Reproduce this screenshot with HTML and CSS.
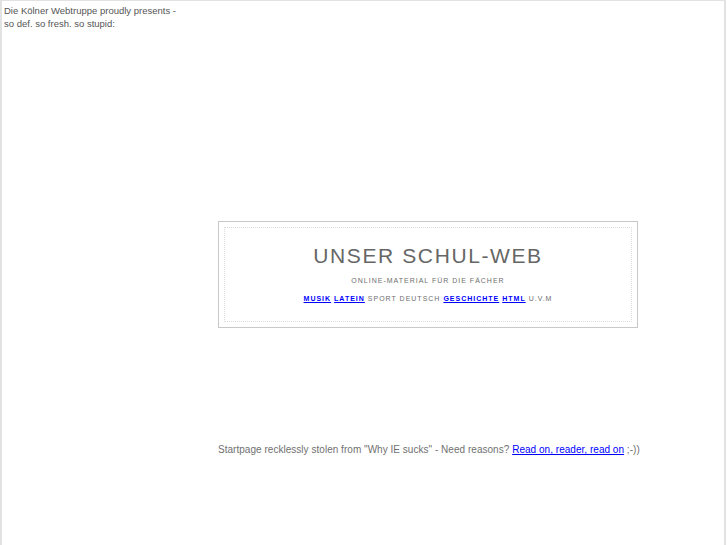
FILE: index.html
```html
<!DOCTYPE html>
<html>
<head>
<meta charset="utf-8">
<title>Unser Schul-Web</title>
<link rel="stylesheet" href="styles.css">
</head>
<body>
<div class="frame">
  <p class="intro">Die Kölner Webtruppe proudly presents -<br>so def. so fresh. so stupid:</p>
  <div class="panel">
    <div class="panel-inner">
      <h1 class="title">UNSER SCHUL-WEB</h1>
      <p class="subtitle">ONLINE-MATERIAL FÜR DIE FÄCHER</p>
      <p class="subjects"><a href="#">MUSIK</a> <a href="#">LATEIN</a> SPORT DEUTSCH <a href="#">GESCHICHTE</a> <a href="#">HTML</a> U.V.M</p>
    </div>
  </div>
  <p class="credit">Startpage recklessly stolen from "Why IE sucks" - Need reasons? <a href="#">Read on, reader, read on</a> ;-))</p>
</div>
</body>
</html>
```

FILE: styles.css
```css
html, body {
  margin: 0;
  padding: 0;
  background: #fff;
}

body {
  font-family: "Liberation Sans", Arial, sans-serif;
  color: #666;
}

.frame {
  border-top: 1px solid #e2e2e2;
  border-left: 2px solid #e2e2e2;
  border-right: 2px solid #e2e2e2;
  margin-right: 1px;
  min-height: 600px;
  box-sizing: border-box;
}

.intro {
  margin: 0;
  padding: 3px 0 0 2px;
  font-size: 9.5px;
  line-height: 13px;
  color: #555;
}

.panel {
  margin: 191px 0 0 216px;
  width: 420px;
  border: 1px solid #c8c8c8;
  padding: 5px;
  box-sizing: border-box;
}

.panel-inner {
  border: 1px dotted #dcdcdc;
  text-align: center;
  padding: 16px 0 17px;
}

.title {
  margin: 0;
  font-weight: normal;
  font-size: 21px;
  line-height: 24px;
  letter-spacing: 1.6px;
  color: #666;
}

.subtitle {
  margin: 8px 0 0;
  font-size: 7px;
  line-height: 10px;
  letter-spacing: 1px;
  color: #6f6f6f;
}

.subjects {
  margin: 8px 0 0;
  font-size: 7px;
  line-height: 10px;
  letter-spacing: 1px;
  color: #6f6f6f;
}

.subjects a {
  color: #00f;
  font-weight: bold;
}

.credit {
  margin: 115px 0 0 216px;
  font-size: 10px;
  line-height: 13px;
  letter-spacing: 0.03px;
  color: #707070;
}

.credit a {
  color: #00f;
}
```
